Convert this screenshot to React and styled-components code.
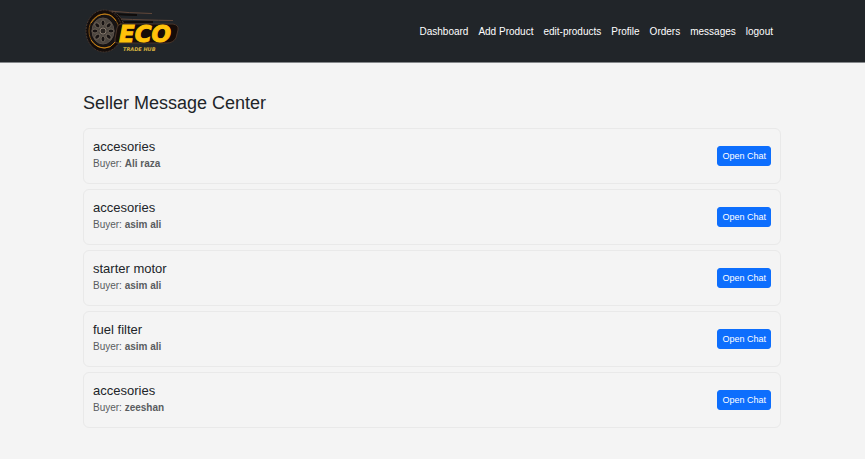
import React from "react";
import styled, { createGlobalStyle } from "styled-components";

const GlobalStyle = createGlobalStyle`
  *, *::before, *::after { box-sizing: border-box; }
  body {
    margin: 0;
    background: #f4f4f4;
    color: #212529;
    font-family: "Liberation Sans", Arial, sans-serif;
  }
`;

const Header = styled.header`
  background: #212529;
  border-bottom: 1px solid #85888b;
`;

const Container = styled.div`
  width: 100%;
  max-width: 715px;
  margin: 0 auto;
  padding: 0 9px 0 8px;
`;

const Bar = styled(Container)`
  display: flex;
  align-items: center;
  justify-content: space-between;
  padding-top: 6px;
  padding-bottom: 6px;
`;

const Brand = styled.a`
  display: block;
  line-height: 0;
`;

const NavList = styled.ul`
  display: flex;
  flex-wrap: wrap;
  gap: 10px;
  margin: 0;
  padding: 0 8px 0 0;
  list-style: none;
`;

const NavLink = styled.a`
  display: block;
  color: #fff;
  font-size: 10px;
  line-height: 15px;
  text-decoration: none;
`;

const Main = styled(Container)`
  padding-top: 30px;
  padding-bottom: 30px;
`;

const Heading = styled.h1`
  margin: 0 0 14px;
  font-size: 18px;
  font-weight: 400;
  line-height: 21px;
`;

const ChatList = styled.ul`
  display: grid;
  gap: 5px;
  margin: 0;
  padding: 0;
  list-style: none;
`;

const ChatCard = styled.li`
  display: flex;
  align-items: center;
  justify-content: space-between;
  padding: 10px 9px;
  border: 1px solid #e9e9e9;
  border-radius: 6px;
`;

const Product = styled.h2`
  margin: 0 0 1px;
  font-size: 13px;
  font-weight: 400;
  line-height: 16px;
`;

const Buyer = styled.p`
  margin: 0 0 2px;
  color: #595c5f;
  font-size: 10px;
  line-height: 15px;
`;

const ChatButton = styled.button`
  padding: 3px 4px;
  border: 1px solid #0d6efd;
  border-radius: 3px;
  background: #0d6efd;
  color: #fff;
  font-family: inherit;
  font-size: 9px;
  line-height: 12px;
  cursor: pointer;
`;

const LogoText = styled.text`
  font-family: "DejaVu Sans", sans-serif;
  font-weight: 700;
  font-style: italic;
  font-size: ${(p) => p.$size}px;
`;

const links = ["Dashboard", "Add Product", "edit-products", "Profile", "Orders", "messages", "logout"];

const chats = [
  { id: 1, product: "accesories", buyer: "Ali raza" },
  { id: 2, product: "accesories", buyer: "asim ali" },
  { id: 3, product: "starter motor", buyer: "asim ali" },
  { id: 4, product: "fuel filter", buyer: "asim ali" },
  { id: 5, product: "accesories", buyer: "zeeshan" },
];

const holes = [0, 45, 90, 135, 180, 225, 270, 315];

function Logo() {
  return (
    <svg width="100" height="50" viewBox="0 0 100 50" role="img" aria-label="Eco Trade Hub">
      <path d="M22 4 Q36 4 42 19 L38 24 H30 Z" fill="#130c0a" />
      <path d="M26 5 Q46 7 69 7.500 M38 13 Q60 14 90 14.500" fill="none" stroke="#62483a" strokeWidth="1" />
      <path d="M32 8 Q44 9 54 9 M39 16 L70 16" fill="none" stroke="#0f0c0b" strokeWidth="2" />
      <path d="M29 5 Q38 9 41 19" fill="none" stroke="#55453a" strokeDasharray="2 1" />
      <ellipse cx="21" cy="25" rx="18" ry="21" fill="#130c0a" stroke="#4a382e" strokeWidth="1" strokeDasharray="2 1" />
      <ellipse cx="21" cy="25" rx="15" ry="17" fill="#171313" stroke="#7d5015" strokeWidth="1" />
      <path d="M8 17 Q14 8 22 8 Q29 8 33 15 M8 34 Q13 42 22 42 Q28 42 32 36" fill="none" stroke="#c98418" strokeWidth="1" />
      <ellipse cx="20" cy="25" rx="11" ry="13" fill="#4a443e" stroke="#5a5049" strokeWidth="1" />
      {holes.map((angle) => (
        <ellipse
          key={angle}
          cx="20"
          cy="17"
          rx="2"
          ry="3"
          fill="#171313"
          stroke="#6b6157"
          strokeWidth="1"
          transform={`rotate(${angle} 20 25)`}
        />
      ))}
      <circle cx="20" cy="25" r="3" fill="#292421" stroke="#85796d" />
      <path
        d="M38 18 H90 Q96 19 95 24 L93 32 Q90 37 84 37 H34 Q31 37 32 33 L34 22 Q35 18 38 18 Z"
        fill="#160c08"
        stroke="#49352a"
        strokeWidth="1"
      />
      <LogoText $size={23} x="36" y="36" fill="#ffc20a" stroke="#ffc20a" strokeWidth="1">
        ECO
      </LogoText>
      <LogoText $size={5} x="40" y="45" fill="#d4b040">
        TRADE HUB
      </LogoText>
    </svg>
  );
}

export default function App() {
  return (
    <>
      <GlobalStyle />
      <Header>
        <Bar>
          <Brand href="#home">
            <Logo />
          </Brand>
          <nav aria-label="Main">
            <NavList>
              {links.map((label) => (
                <li key={label}>
                  <NavLink href={`#${label.toLowerCase().replace(" ", "-")}`}>{label}</NavLink>
                </li>
              ))}
            </NavList>
          </nav>
        </Bar>
      </Header>
      <Main as="main">
        <Heading>Seller Message Center</Heading>
        <ChatList>
          {chats.map((chat) => (
            <ChatCard key={chat.id}>
              <div>
                <Product>{chat.product}</Product>
                <Buyer>
                  Buyer: <strong>{chat.buyer}</strong>
                </Buyer>
              </div>
              <ChatButton type="button">Open Chat</ChatButton>
            </ChatCard>
          ))}
        </ChatList>
      </Main>
    </>
  );
}
